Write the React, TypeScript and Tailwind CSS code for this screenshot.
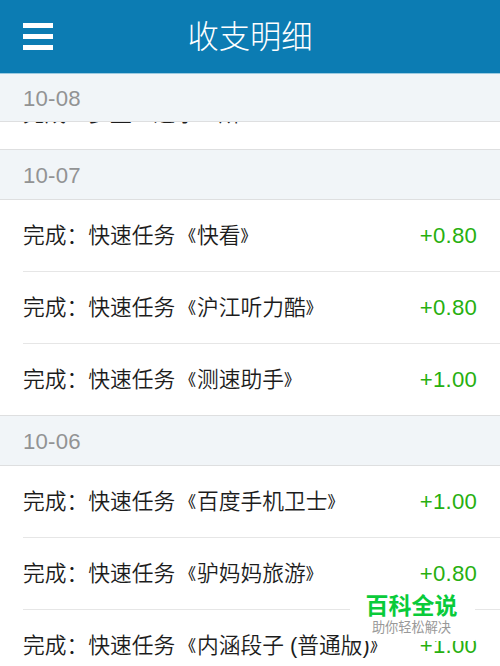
interface Entry {
  title: string;
  amount: string;
}

interface Day {
  date: string;
  entries: Entry[];
}

const days: Day[] = [
  {
    date: "10-07",
    entries: [
      { title: "完成：快速任务《快看》", amount: "+0.80" },
      { title: "完成：快速任务《沪江听力酷》", amount: "+0.80" },
      { title: "完成：快速任务《测速助手》", amount: "+1.00" },
    ],
  },
  {
    date: "10-06",
    entries: [
      { title: "完成：快速任务《百度手机卫士》", amount: "+1.00" },
      { title: "完成：快速任务《驴妈妈旅游》", amount: "+0.80" },
      { title: "完成：快速任务《内涵段子 (普通版)》", amount: "+1.00" },
    ],
  },
];

function Header() {
  return (
    <header className="flex h-[74px] shrink-0 items-center border-b border-[#9ccbe1] bg-[#0c7cb3] px-[23px]">
      <button type="button" aria-label="菜单" className="flex w-[30px] flex-col gap-[6px]">
        <span className="h-[5px] bg-white" />
        <span className="h-[5px] bg-white" />
        <span className="h-[5px] bg-white" />
      </button>
      <h1 className="flex-1 pt-0.5 pr-[30px] text-center text-[31.3px] leading-none font-light text-white">
        收支明细
      </h1>
    </header>
  );
}

function DateBar({ date }: { date: string }) {
  return (
    <div className="flex h-[51px] shrink-0 items-center border-y border-[#dedfe0] bg-[#f1f5f8] px-[23px] pt-[3px] text-[22.2px] tracking-[0.2px] text-[#929394]">
      {date}
    </div>
  );
}

/** Title text, with the book-title marks drawn smaller than the characters. */
function Title({ text }: { text: string }) {
  return (
    <span className="pt-0.5 text-[21.75px] font-[350] text-[#1c1c1c]">
      {text.split(/([《》])/).map((part, i) => {
        if (part === "《") {
          return (
            <span
              key={i}
              className="inline-block w-[21.75px] pr-px text-right align-[2px] text-[16px] leading-none font-medium"
            >
              {part}
            </span>
          );
        }
        if (part === "》") {
          return (
            <span
              key={i}
              className="inline-block align-[2px] text-[16px] leading-none font-medium"
            >
              {part}
            </span>
          );
        }
        return part;
      })}
    </span>
  );
}

function EntryRow({ entry, last }: { entry: Entry; last: boolean }) {
  return (
    <li
      className={[
        "ml-[23px] flex items-center justify-between pr-[23px] whitespace-nowrap",
        last ? "h-[71px]" : "h-[72px] border-b border-[#e6e6e6]",
      ].join(" ")}
    >
      <Title text={entry.title} />
      <span className="text-[22.2px] tracking-[0.2px] text-[#27b010]">{entry.amount}</span>
    </li>
  );
}

export default function App() {
  return (
    <div className="relative flex h-[666px] w-[500px] flex-col overflow-hidden bg-white font-['Liberation_Sans','Noto_Sans_CJK_SC',sans-serif]">
      <Header />

      {/* pinned date bar, with the tail of a scrolled row under it */}
      <div className="flex h-[48px] shrink-0 items-center border-b border-[#dedfe0] bg-[#f1f5f8] px-[23px] pt-0.5 text-[22.2px] tracking-[0.2px] text-[#929394]">
        10-08
      </div>
      <div className="flex h-[27px] shrink-0 items-end overflow-hidden">
        <div className="ml-[23px] flex h-[71px] items-center pb-px whitespace-nowrap">
          <Title text="完成：多盟《速乐三所》" />
        </div>
      </div>

      {days.map((day) => (
        <section key={day.date} className="shrink-0">
          <DateBar date={day.date} />
          <ul>
            {day.entries.map((entry, i) => (
              <EntryRow
                key={entry.title}
                entry={entry}
                last={i === day.entries.length - 1}
              />
            ))}
          </ul>
        </section>
      ))}

      <div className="absolute top-[591px] left-[350px] flex h-[50px] w-[125px] flex-col items-center bg-white pr-0.5">
        <div className="mt-[3px] text-[23px] leading-6 font-bold text-[#09cb3a]">百科全说</div>
        <div className="mt-[2px] text-[13.2px] leading-4 text-[#999]">助你轻松解决</div>
      </div>
    </div>
  );
}
